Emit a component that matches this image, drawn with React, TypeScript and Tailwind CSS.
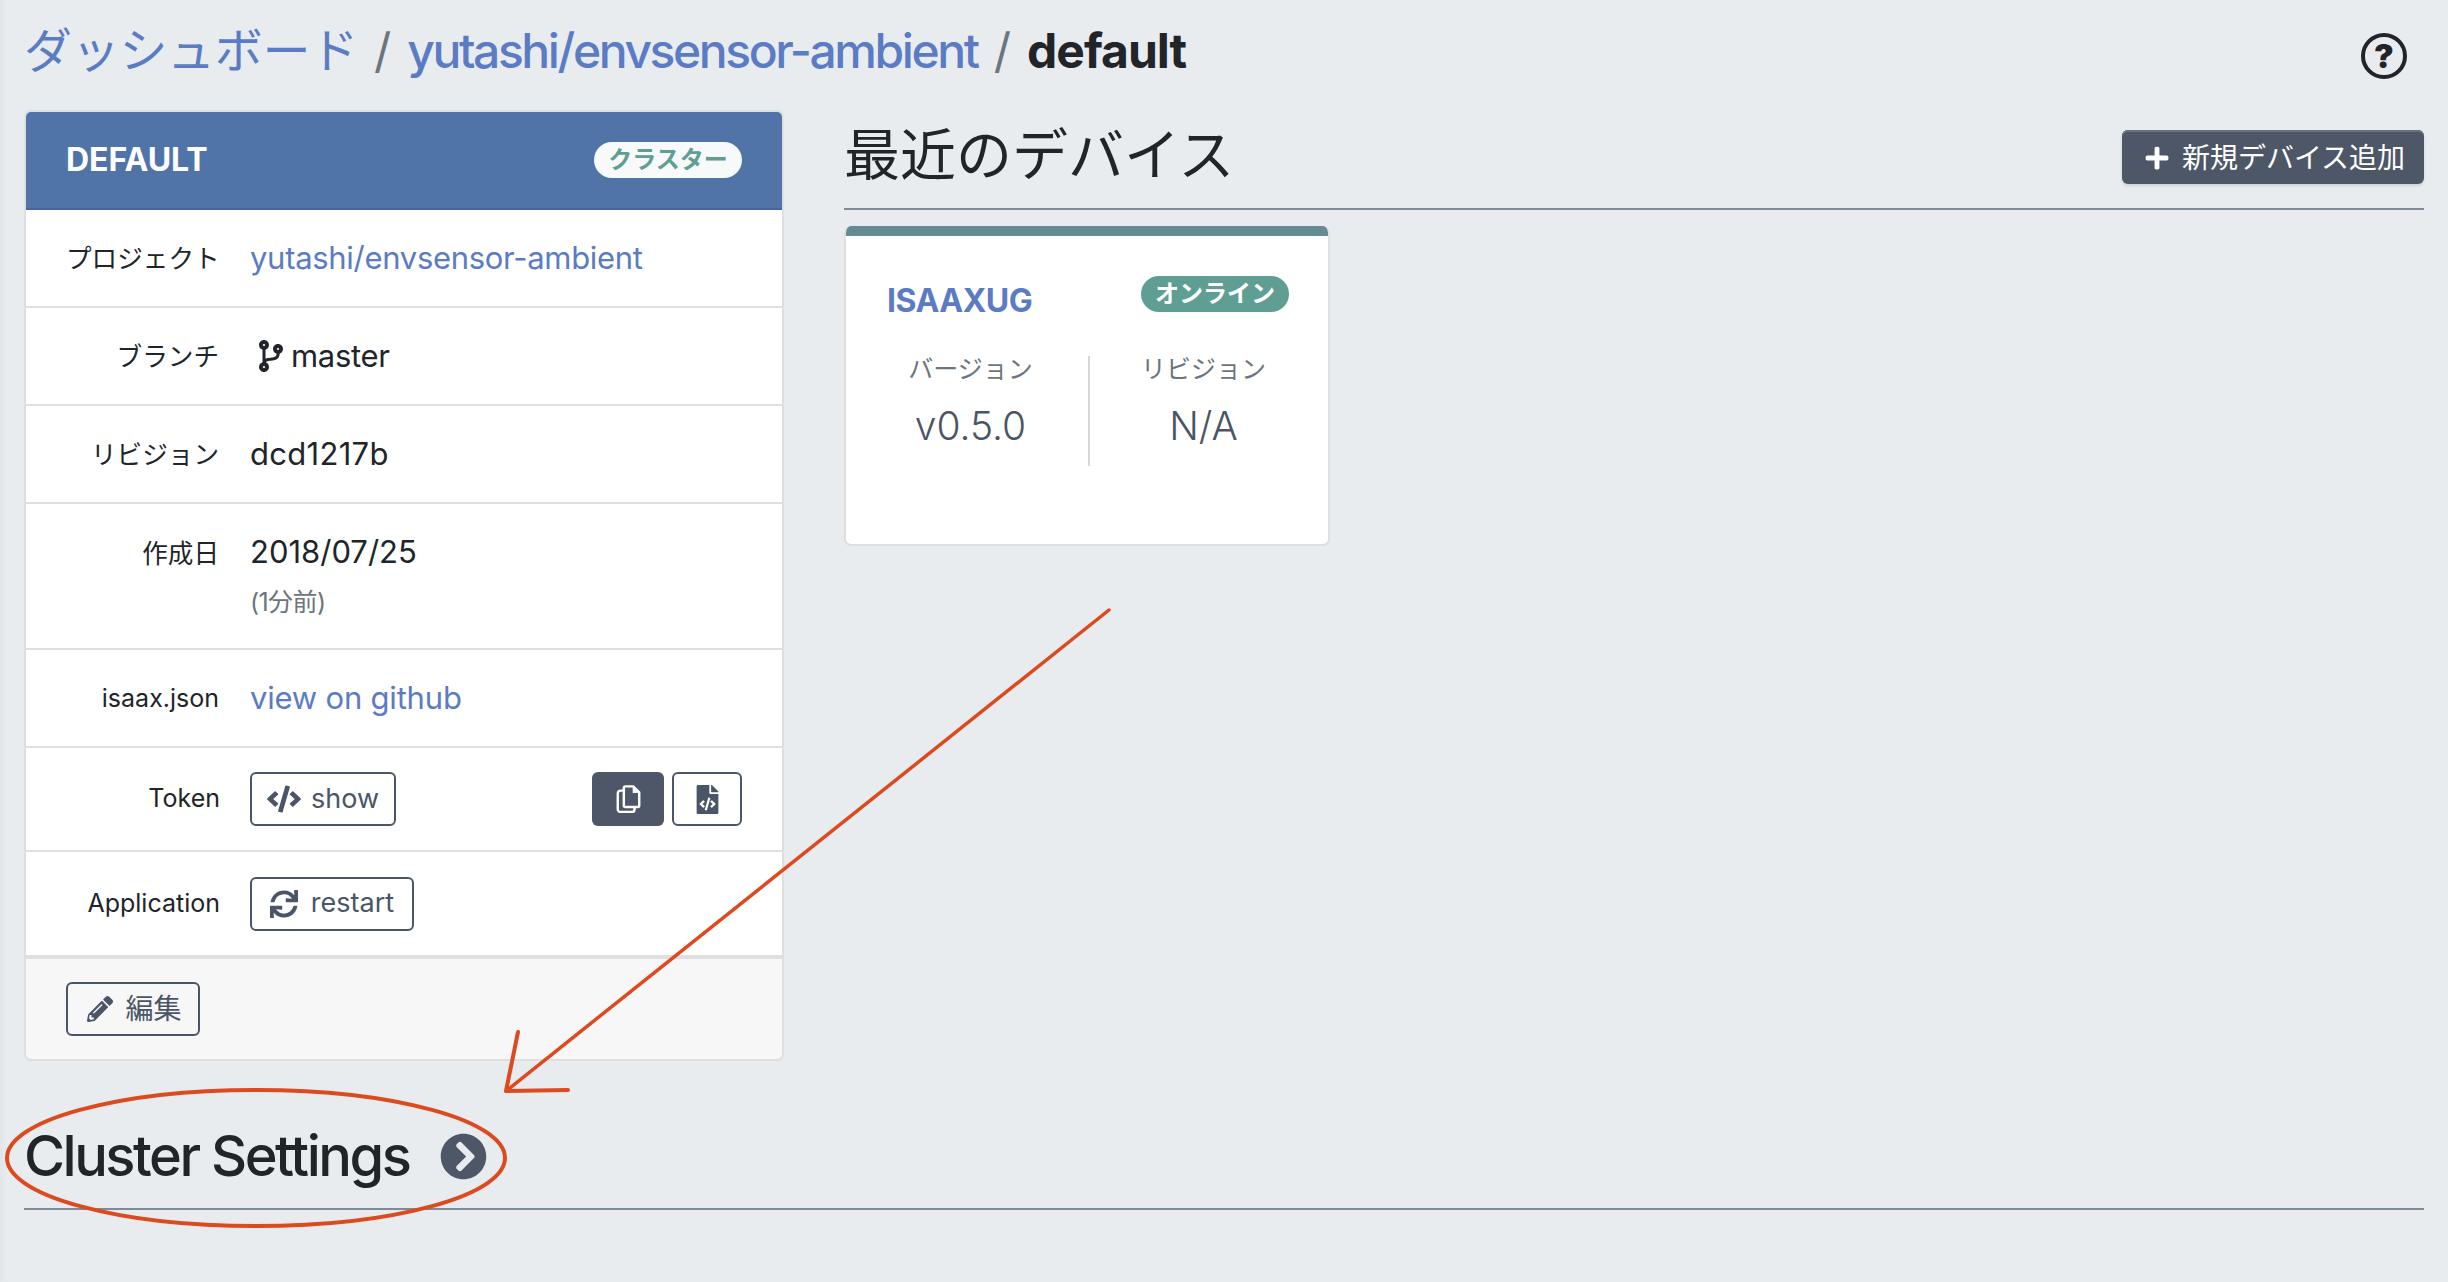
import React from "react";
import { FaCodeBranch, FaCode, FaFileCode, FaSync, FaPencilAlt, FaPlus, FaChevronCircleRight } from "react-icons/fa";

const font = { fontFamily: '"Inter","Noto Sans CJK JP",sans-serif' };

function Row({ label, children, tall, latin }: { label: string; children: React.ReactNode; tall?: boolean; latin?: boolean }) {
  return (
    <div className={`flex gap-[30px] border-b-2 border-[#dfdfdf] px-[40px] ${tall ? "h-[146px] items-start pt-[28px]" : "h-[98px] items-center"}`}>
      <div className={`w-[154px] shrink-0 whitespace-nowrap pt-[2px] pr-[1px] text-right text-[#212529] ${latin ? "text-[25px]" : "text-[25.6px]"} ${tall ? "leading-[40px]" : ""}`}>{label}</div>
      <div className="flex min-w-0 flex-1 items-center">{children}</div>
    </div>
  );
}

function OutlineButton({ children, className = "" }: { children: React.ReactNode; className?: string }) {
  return (
    <button className={`flex h-[54px] items-center justify-center rounded-[6px] border-2 border-[#4a5568] text-[27px] text-[#4a5568] ${className}`}>
      {children}
    </button>
  );
}

function CopyIcon() {
  return (
    <svg viewBox="0 0 26 30" className="h-[28px] w-[25px]" fill="none" stroke="white" strokeWidth="2.6" strokeLinejoin="round">
      <rect x="1.5" y="6" width="18" height="23" rx="3" fill="#4e5767" />
      <path d="M8 6V3a1.5 1.5 0 0 1 1.5-1.5H18l6.5 6.5v14a1.5 1.5 0 0 1-1.5 1.5H9.5A1.5 1.5 0 0 1 8 22z" fill="#4e5767" />
      <path d="M17.5 2v6.5H24" fill="white" stroke="none" />
    </svg>
  );
}

function Annotation() {
  return (
    <svg className="pointer-events-none absolute left-0 top-0" width="2448" height="1282" fill="none" stroke="#dc4a20" strokeWidth="3.5" strokeLinecap="round" strokeLinejoin="round">
      <ellipse cx="256" cy="1158" rx="249" ry="68" strokeWidth="4" />
      <path d="M1109 610L506 1091" />
      <path d="M518 1032L506 1091L568 1090" strokeWidth="4" />
    </svg>
  );
}

export default function App() {
  return (
    <div className="relative h-[1282px] w-full overflow-hidden bg-[#e9ecef] text-[#212529] shadow-[inset_6px_0_6px_-4px_rgba(0,0,0,0.04)]" style={font}>
      <div className="flex h-[110px] items-start justify-between px-[24px] pt-[21px]">
        <div className="flex items-center gap-[16px] text-[48px] leading-[60px]">
          <a className="tracking-[-0.3px] text-[#5b7cc4]">ダッシュボード</a>
          <span className="text-[#6c757d]">/</span>
          <a className="font-medium tracking-[-2.4px] text-[#5b7cc4]">yutashi/envsensor-ambient</a>
          <span className="text-[#6c757d]">/</span>
          <span className="font-bold tracking-[-1px]">default</span>
        </div>
        <div className="mr-[17px] mt-[12px] flex h-[46px] w-[46px] items-center justify-center rounded-full border-[4.5px] border-[#212529] text-[33px] font-black leading-none">?</div>
      </div>

      <div className="flex gap-[60px] px-[24px]">
        <div className="w-[760px] shrink-0">
          <div className="overflow-hidden rounded-[7px] border-2 border-[#dfdfdf]">
            <div className="flex h-[98px] items-center justify-between border-b-2 border-[#47679a] bg-[#5174a8] px-[40px]">
              <span className="text-[32px] font-bold text-white">DEFAULT</span>
              <span className="flex h-[36px] w-[148px] items-center justify-center rounded-full bg-[#f8f9fa] text-[24px] font-bold text-[#5f9f93]">クラスター</span>
            </div>
            <div className="bg-white">
              <Row label="プロジェクト"><a className="text-[31px] tracking-[-0.3px] text-[#5b7cc4]">yutashi/envsensor-ambient</a></Row>
              <Row label="ブランチ">
                <FaCodeBranch className="ml-[5px] mr-[4px] text-[32px]" />
                <span className="text-[31px] tracking-[-0.3px]">master</span>
              </Row>
              <Row label="リビジョン"><span className="text-[31px] tracking-[0.3px]">dcd1217b</span></Row>
              <Row label="作成日" tall>
                <div>
                  <div className="text-[31px] leading-[40px]">2018/07/25</div>
                  <div className="mt-[12px] text-[25px] leading-[36px] tracking-[-0.6px] text-[#6c757d]">(1分前)</div>
                </div>
              </Row>
              <Row label="isaax.json" latin><a className="text-[31px] tracking-[-0.2px] text-[#5b7cc4]">view on github</a></Row>
              <div className="flex h-[104px] items-center gap-[30px] border-b-2 border-[#dfdfdf] px-[40px]">
                <div className="w-[154px] shrink-0 text-right text-[25px]">Token</div>
                <div className="flex flex-1 items-center justify-between">
                  <OutlineButton className="w-[146px] gap-[10px]"><FaCode className="text-[34px]" />show</OutlineButton>
                  <div className="flex gap-[8px]">
                    <button className="flex h-[54px] w-[72px] items-center justify-center rounded-[6px] bg-[#4e5767]"><CopyIcon /></button>
                    <OutlineButton className="w-[70px]"><FaFileCode className="text-[29px]" /></OutlineButton>
                  </div>
                </div>
              </div>
              <div className="flex h-[103px] items-center gap-[30px] px-[40px]">
                <div className="w-[154px] shrink-0 text-right text-[25px]">Application</div>
                <OutlineButton className="w-[164px] gap-[13px]"><FaSync className="text-[28px]" />restart</OutlineButton>
              </div>
            </div>
            <div className="h-[104px] border-t-[4px] border-[#dfdfdf] bg-[#f7f7f7] px-[40px] pt-[23px]">
              <OutlineButton className="w-[134px] gap-[12px] pl-[3px] text-[28px]"><FaPencilAlt className="text-[26px]" />編集</OutlineButton>
            </div>
          </div>
        </div>

        <div className="min-w-0 flex-1">
          <div className="flex h-[100px] items-start justify-between border-b-2 border-[#7d8a97]">
            <h2 className="pt-[10px] text-[56px] leading-[70px]">最近のデバイス</h2>
            <button className="mt-[20px] flex h-[54px] w-[302px] items-center justify-center gap-[12px] rounded-[6px] bg-[#4e5767] pl-[3px] pt-[2px] text-[28px] text-white shadow-[inset_0_2px_0_#687182,0_2px_3px_rgba(0,0,0,0.1)]">
              <FaPlus className="text-[26px]" />新規デバイス追加
            </button>
          </div>

          <div className="mt-[16px] h-[320px] w-[486px] overflow-hidden rounded-[7px] border-2 border-t-0 border-[#dfdfdf] bg-white">
            <div className="h-[10px] bg-[#658a92]" />
            <div className="flex items-start justify-between pl-[41px] pr-[39px] pt-[40px]">
              <span className="pt-[7px] text-[32px] font-bold leading-[36px] tracking-[-0.5px] text-[#5b7cc4]">ISAAXUG</span>
              <span className="flex h-[36px] w-[148px] items-center justify-center rounded-full bg-[#5f9f93] text-[24px] font-bold text-white">オンライン</span>
            </div>
            <div className="mt-[37px] flex h-[110px] pl-[7px] pr-[11px]">
              <div className="w-[235px] text-center">
                <div className="text-[25px] leading-[26px] text-[#6c757d]">バージョン</div>
                <div className="mt-[19px] text-[39px] font-light leading-[50px] text-[#4a5568]">v0.5.0</div>
              </div>
              <div className="w-[2px] bg-[#d5d8db]" />
              <div className="flex-1 text-center">
                <div className="text-[25px] leading-[26px] text-[#6c757d]">リビジョン</div>
                <div className="mt-[19px] text-[39px] font-light leading-[50px] text-[#4a5568]">N/A</div>
              </div>
            </div>
          </div>
        </div>
      </div>

      <div className="mx-[24px] mt-[43px] flex h-[106px] items-center gap-[31px] border-b-2 border-[#7d8a97]">
        <h2 className="text-[56px] font-medium leading-[64px] tracking-[-2.5px]">Cluster Settings</h2>
        <FaChevronCircleRight className="text-[47px] text-[#4e5767]" />
      </div>

      <Annotation />
    </div>
  );
}
